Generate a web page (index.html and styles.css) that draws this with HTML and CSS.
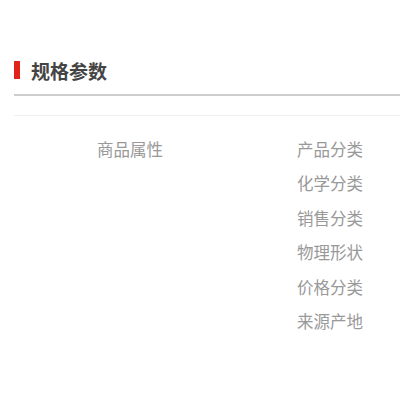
FILE: index.html
```html
<!DOCTYPE html>
<html lang="zh">
<head>
    <meta charset="UTF-8">
    <meta name="viewport" content="width=device-width, initial-scale=1.0">
    <title>规格参数</title>
    <link rel="stylesheet" href="styles.css">
</head>
<body>
    <div class="spec">
        <div class="spec-head">
            <span class="spec-mark"></span>
            <h2>规格参数</h2>
        </div>

        <div class="spec-body">
            <div class="spec-label">商品属性</div>
            <ul class="spec-list">
                <li>产品分类</li>
                <li>化学分类</li>
                <li>销售分类</li>
                <li>物理形状</li>
                <li>价格分类</li>
                <li>来源产地</li>
            </ul>
        </div>
    </div>
</body>
</html>
```

FILE: styles.css
```css
/* 全局样式 */
body {
    margin: 0;
    background-color: #ffffff;
    font-family: "Noto Sans CJK SC", "Noto Sans", sans-serif;
}

/* 容器 */
.spec {
    padding: 52px 0 0 14px;
}

/* 标题栏 */
.spec-head {
    display: flex;
    align-items: center;
    height: 36px;
    padding-bottom: 6px;
    border-bottom: 2px solid #cdcdcd;
}

.spec-mark {
    width: 6px;
    height: 18px;
    background-color: #e2231a;
    margin-right: 11px;
}

.spec-head h2 {
    margin: 0;
    font-size: 19px;
    font-weight: bold;
    color: #444444;
    line-height: 1;
}

/* 参数表 */
.spec-body {
    display: grid;
    grid-template-columns: auto 1fr;
    margin-top: 19px;
    border-top: 1px solid #efefef;
    padding: 16px 37px 0 83px;
    font-size: 16.5px;
    color: #999999;
}

.spec-label {
    line-height: 34.4px;
}

.spec-list {
    list-style: none;
    margin: 0;
    padding: 0;
    text-align: right;
}

.spec-list li {
    line-height: 34.4px;
}
```
